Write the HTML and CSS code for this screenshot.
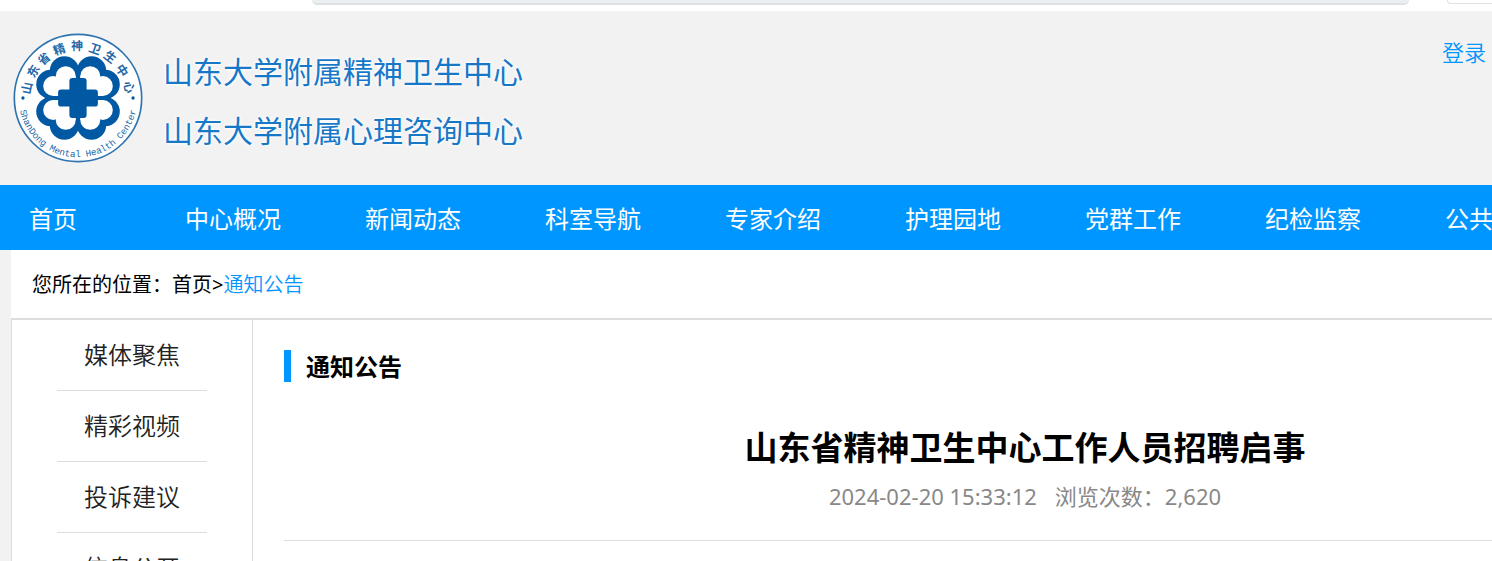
FILE: index.html
```html
<!DOCTYPE html>
<html lang="zh-CN">
<head>
  <meta charset="UTF-8">
  <title>山东省精神卫生中心工作人员招聘启事</title>
  <meta name="viewport" content="width=device-width, initial-scale=1.0">
  <link rel="stylesheet" href="styles.css">
</head>
<body>
  <div class="browser-strip">
    <div class="address-bar"></div>
    <div class="search-bar"></div>
  </div>

  <header class="header">
    <a class="brand" href="#">
      <svg class="logo" viewBox="-196 -196 392 392" aria-hidden="true">
        <circle r="192" fill="#fff" stroke="#2d74b0" stroke-width="5"/>
        <!-- flower -->
        <g fill="#0259a3">
          <rect x="-82" y="-82" width="164" height="164"/>
          <circle cx="-41" cy="-82" r="44"/><circle cx="-82" cy="-41" r="44"/>
          <circle cx="41" cy="-82" r="44"/><circle cx="82" cy="-41" r="44"/>
          <circle cx="-41" cy="82" r="44"/><circle cx="-82" cy="41" r="44"/>
          <circle cx="41" cy="82" r="44"/><circle cx="82" cy="41" r="44"/>
        </g>
        <!-- petals -->
        <defs>
          <g id="petal">
            <circle cx="-37" cy="-66" r="30"/>
            <circle cx="-75" cy="-36" r="30"/>
            <path d="M-58-60L-37-66L-7-66V-6H-75Z"/>
          </g>
          <path id="ring" d="M-179 0A179 179 0 0 0 179 0"/>
        </defs>
        <g fill="#fff">
          <use href="#petal"/>
          <use href="#petal" transform="scale(-1 1)"/>
          <use href="#petal" transform="scale(1 -1)"/>
          <use href="#petal" transform="scale(-1 -1)"/>
        </g>
        <!-- cross -->
        <g fill="#0259a3">
          <rect x="-60" y="-26" width="120" height="52" rx="9"/>
          <rect x="-26" y="-60" width="52" height="120" rx="9"/>
          <circle cx="-166" cy="0" r="5"/>
          <circle cx="166" cy="0" r="5"/>
        </g>
        <g class="ring-cn">
          <text y="-144" transform="rotate(-79)">山</text>
          <text y="-144" transform="rotate(-59)">东</text>
          <text y="-144" transform="rotate(-41)">省</text>
          <text y="-144" transform="rotate(-21)">精</text>
          <text y="-144" transform="rotate(-1)">神</text>
          <text y="-144" transform="rotate(19)">卫</text>
          <text y="-144" transform="rotate(38)">生</text>
          <text y="-144" transform="rotate(58)">中</text>
          <text y="-144" transform="rotate(78)">心</text>
        </g>
        <text class="ring-en"><textPath href="#ring" startOffset="50%">ShanDong Mental Health Center</textPath></text>
      </svg>
      <span class="brand-name">
        <span>山东大学附属精神卫生中心</span>
        <span>山东大学附属心理咨询中心</span>
      </span>
    </a>
    <a class="login" href="#">登录</a>
  </header>

  <nav class="nav">
    <a class="home" href="#">首页</a>
    <a href="#">中心概况</a>
    <a href="#">新闻动态</a>
    <a href="#">科室导航</a>
    <a href="#">专家介绍</a>
    <a href="#">护理园地</a>
    <a href="#">党群工作</a>
    <a href="#">纪检监察</a>
    <a href="#">公共服务</a>
  </nav>

  <div class="page">
    <div class="crumbs">您所在的位置：<a href="#">首页</a>&gt;<a class="current" href="#">通知公告</a></div>
    <div class="columns">
      <aside class="sidebar">
        <ul>
          <li><a href="#">媒体聚焦</a></li>
          <li><a href="#">精彩视频</a></li>
          <li><a href="#">投诉建议</a></li>
          <li><a href="#">信息公开</a></li>
        </ul>
      </aside>
      <main class="content">
        <h2>通知公告</h2>
        <div class="article-head">
          <h1>山东省精神卫生中心工作人员招聘启事</h1>
          <p class="meta"><span>2024-02-20 15:33:12</span><span>浏览次数：2,620</span></p>
        </div>
      </main>
    </div>
  </div>
</body>
</html>
```
FILE: styles.css
```css
* { box-sizing:border-box; }
body { margin:0; height:100vh; overflow:hidden; background:#f2f2f2; color:#000; font-family:"Noto Sans","Noto Sans CJK SC",sans-serif; }
a { color:inherit; text-decoration:none; }
h1, h2, p, ul { margin:0; padding:0; }

.browser-strip { display:flex; align-items:flex-start; gap:38px; height:11px; padding-left:312px; background:#fff; }
.address-bar { flex:1; height:5px; background:#eceff1; border-bottom:2px solid #dde2e3; border-radius:0 0 12px 12px; }
.search-bar { width:45px; height:4px; border-bottom:1px solid #dde2e3; border-left:1px solid #dde2e3; border-radius:0 0 0 8px; }

.header { display:flex; justify-content:space-between; align-items:flex-start; height:174px; padding:22px 6px 0 13px; }
.brand { display:flex; align-items:center; gap:20px; }
.logo { width:130px; height:130px; }
.brand-name { display:flex; flex-direction:column; padding-top:6px; color:#1878c8; font-size:30px; line-height:59px; white-space:nowrap; text-shadow:0 0 2px #fff, 0 0 3px #fff, 0 0 4px #fff; }
.ring-cn { fill:#2468a8; font-size:36px; font-weight:bold; text-anchor:middle; }
.ring-en { fill:#2468a8; font-family:"Liberation Mono",monospace; font-size:28px; text-anchor:middle; }
.login { color:#0096ff; font-size:22px; font-weight:350; line-height:38px; }

.nav { display:flex; height:65px; overflow:hidden; background:#0096ff; color:#fff; font-size:24px; line-height:67px; }
.nav a { flex:0 0 180px; text-align:center; }
.nav .home { flex-basis:143px; padding-left:29px; text-align:left; }

/* wide layout, runs off the right edge on smaller windows */
.page { min-width:1766px; margin-left:11px; background:#fff; }
.crumbs { height:70px; padding-left:21px; border-bottom:2px solid #ddd; font-size:20px; line-height:70px; }
.crumbs .current { color:#0096ff; font-weight:350; }
.columns { display:flex; min-height:600px; }
.sidebar { flex:0 0 242px; padding:0 45px; border-left:1px solid #ddd; border-right:1px solid #ddd; }
.sidebar ul { list-style:none; }
.sidebar li { border-bottom:1px solid #ddd; color:#222; font-size:24px; font-weight:350; line-height:70px; text-align:center; }
.content { flex:1; padding:30px 11px 0 31px; }
.content h2 { height:32px; padding-left:15px; border-left:7px solid #0096ff; font-size:24px; line-height:34px; }
.article-head { padding:41px 0 28px; border-bottom:1px solid #ddd; text-align:center; }
.article-head h1 { font-size:33px; line-height:50px; }
.meta { display:flex; justify-content:center; gap:18px; padding-top:7px; color:#888; font-size:22px; line-height:32px; }
```
